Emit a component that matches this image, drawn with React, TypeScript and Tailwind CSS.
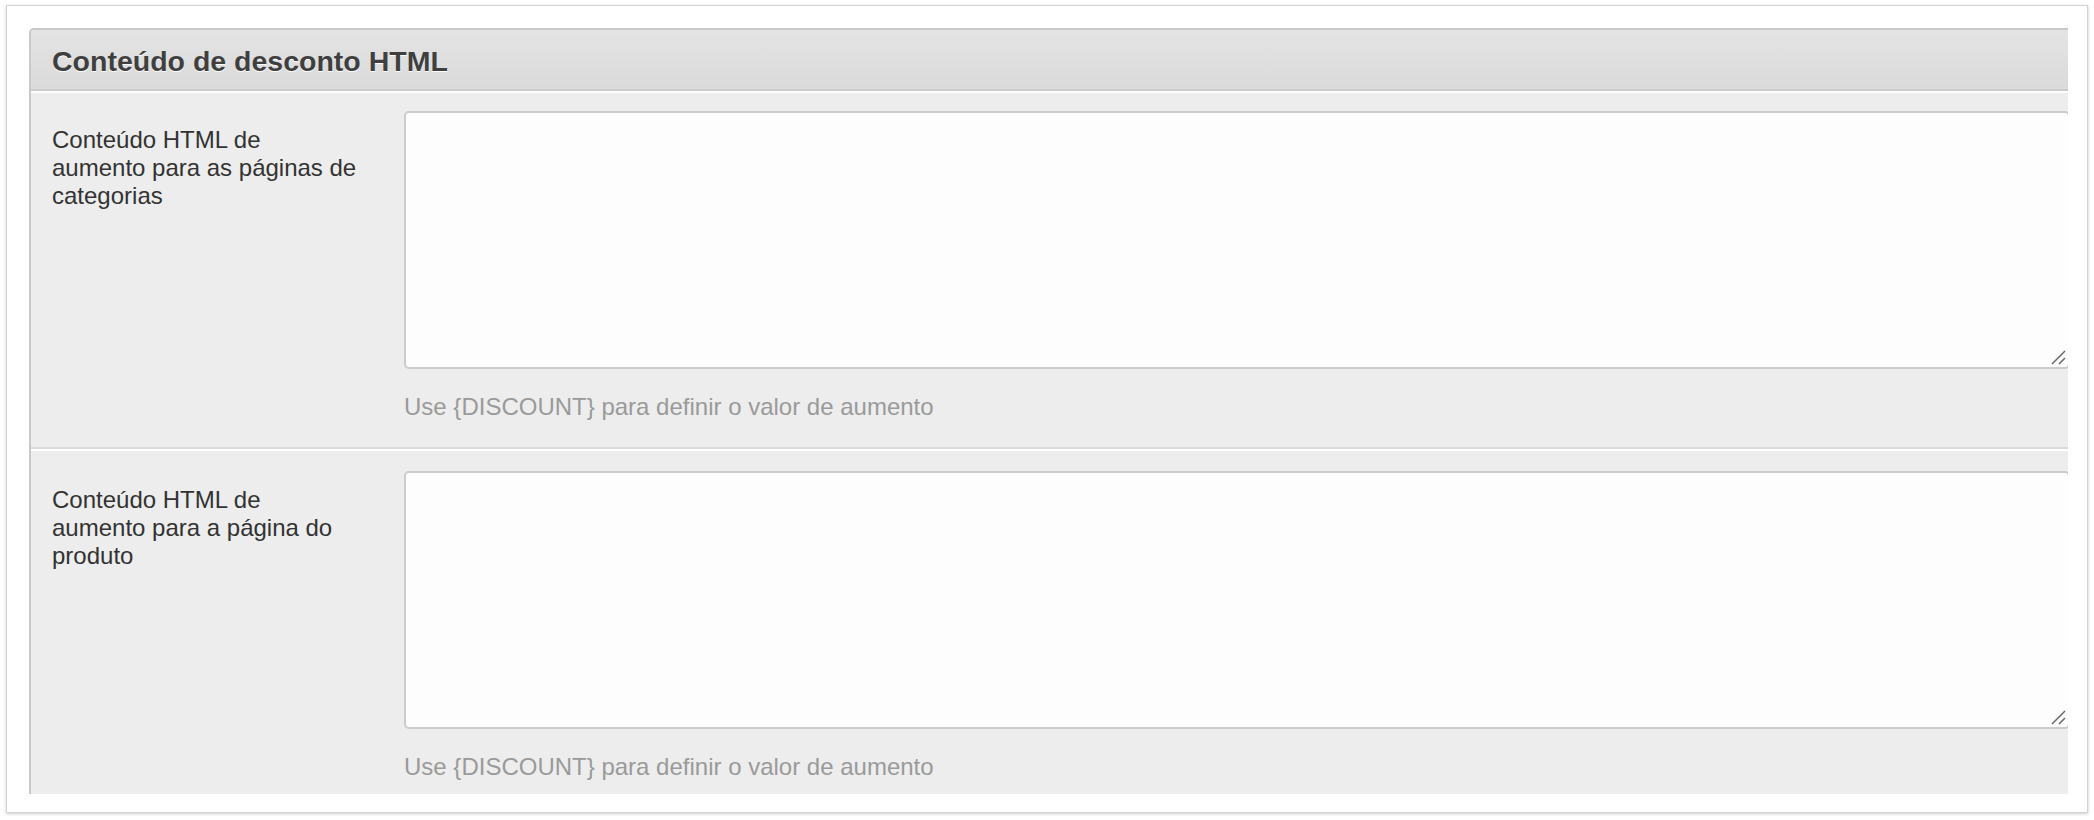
import React from 'react';

const rows = [
  { label: 'Conteúdo HTML de aumento para as páginas de categorias' },
  { label: 'Conteúdo HTML de aumento para a página do produto' },
];

const ResizeGrip: React.FC = () => (
  <svg
    className="absolute right-[4px] bottom-[4px] pointer-events-none"
    width="15"
    height="15"
    viewBox="0 0 15 15"
  >
    <path d="M1 14 L14 1" stroke="#6b6b6b" strokeWidth="1.6" />
    <path d="M8 14 L14 8" stroke="#6b6b6b" strokeWidth="1.6" />
  </svg>
);

const App: React.FC = () => {
  return (
    <div className="w-[2094px] h-[820px] bg-white pt-[5px] pl-[6px] font-['Liberation_Sans',Arial,sans-serif]">
      <div className="w-[2082px] h-[808px] bg-white border border-[#d3d3d3] shadow-[0_1px_3px_rgba(0,0,0,0.2)] pt-[22px] pl-[22px]">
        {/* Panel (clipped on right and bottom like a scroll area) */}
        <div className="w-[2039px] h-[766px] overflow-hidden border-l-2 border-t-2 border-[#c9c9c9] rounded-tl-[5px]">
          <div className="w-[2039px]">
            <div className="bg-gradient-to-b from-[#e4e4e4] to-[#dadada] border-b-2 border-[#cbcbcb] pl-[21px] pt-[13px] pb-[10px]">
              <h3 className="text-[28.5px] leading-[36px] font-bold text-[#3f3f3f] [text-shadow:0_1px_0_#fff]">
                Conteúdo de desconto HTML
              </h3>
            </div>

            {rows.map((row, i) => (
              <div
                key={i}
                className={
                  'flex bg-[#ededed] border-t-2 border-white border-b-2 border-b-[#dadada] pl-[21px] pb-[26px] ' +
                  (i === 0 ? 'pt-[18px]' : 'pt-[20px]')
                }
              >
                <label className="w-[307px] shrink-0 pt-[15px] text-[24px] leading-[28px] text-[#333]">
                  {row.label}
                </label>
                <div className="ml-[45px] flex-1 flex flex-col">
                  <div className="relative">
                    <textarea className="block w-full h-[258px] bg-[#fdfdfd] border-2 border-[#cccccc] rounded-[5px] resize-none outline-none" />
                    <ResizeGrip />
                  </div>
                  <p className="mt-[24px] text-[24px] leading-[28px] text-[#9a9a9a]">
                    Use {'{DISCOUNT}'} para definir o valor de aumento
                  </p>
                </div>
              </div>
            ))}
          </div>
        </div>
      </div>
    </div>
  );
};

export default App;
